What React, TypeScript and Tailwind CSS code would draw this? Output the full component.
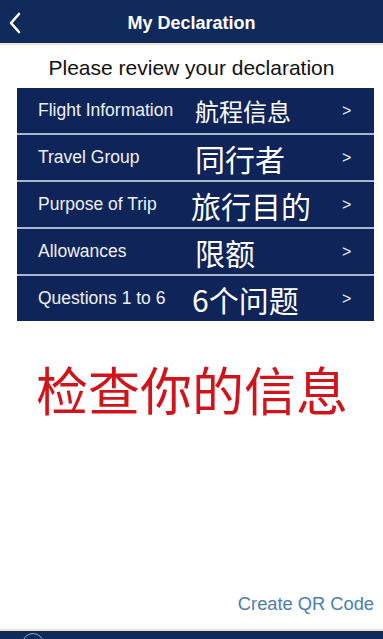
import React from "react";

const rows = [
  { en: "Flight Information", zh: "航程信息", zhSize: "text-[24px]", zhPad: "pl-0" },
  { en: "Travel Group", zh: "同行者", zhSize: "text-[30px]", zhPad: "pl-0" },
  { en: "Purpose of Trip", zh: "旅行目的", zhSize: "text-[30px]", zhPad: "pl-0 -ml-[4px]" },
  { en: "Allowances", zh: "限额", zhSize: "text-[30px]", zhPad: "pl-0" },
  { en: "Questions 1 to 6", zh: "6个问题", zhSize: "text-[30px]", zhPad: "pl-0 -ml-[3px]" },
];

export default function App() {
  return (
    <div
      className="w-[383px] h-[639px] bg-white flex flex-col overflow-hidden"
      style={{ fontFamily: '"Liberation Sans", Arial, "Noto Sans CJK SC", sans-serif' }}
    >
      <div className="h-[45px] bg-[#112a5c] border-b-[2px] border-[#ece4cc] flex items-center relative shrink-0">
        <svg className="absolute left-[8px] top-[12px]" width="14" height="22" viewBox="0 0 14 22">
          <path d="M11 2 L3 11 L11 20" fill="none" stroke="white" strokeWidth="2.6" strokeLinecap="round" strokeLinejoin="round" />
        </svg>
        <div className="w-full text-center text-white text-[18px] font-bold pt-[3px]">My Declaration</div>
      </div>
      <div className="h-[43px] flex items-center justify-center text-[21px] text-[#111] shrink-0 pt-[2px]">
        Please review your declaration
      </div>
      <div className="mx-[17px] w-[357px] flex flex-col bg-[#a9b8cc] gap-[2px] shrink-0">
        {rows.map((r) => (
          <div key={r.en} className="h-[45px] bg-[#0f2458] flex items-center text-white">
            <div className="w-[178px] pl-[21px] text-[17.5px] text-[#eef1f6] whitespace-nowrap">{r.en}</div>
            <div
              className={`flex-1 ${r.zhSize} ${r.zhPad} leading-none`}
              style={{ fontFamily: '"Noto Sans CJK SC", sans-serif' }}
            >
              {r.zh}
            </div>
            <div className="w-[32px] text-[16px] text-[#eef1f6]">&gt;</div>
          </div>
        ))}
      </div>
      <div
        className="mt-[42px] pl-[36px] text-[52px] leading-none text-[#d0141a] shrink-0"
        style={{ fontFamily: '"Noto Sans CJK SC", sans-serif' }}
      >
        检查你的信息
      </div>
      <div className="flex-1" />
      <div className="flex justify-end pr-[9px] pb-[12px] text-[18.3px] text-[#4b7db3] shrink-0">Create QR Code</div>
      <div className="h-[10px] bg-[#112a5c] border-t-[2px] border-[#ece4cc] shrink-0 relative overflow-hidden">
        <div className="absolute left-[22px] top-[2px] w-[22px] h-[22px] rounded-full border border-[#8fa6c8]" />
      </div>
    </div>
  );
}
